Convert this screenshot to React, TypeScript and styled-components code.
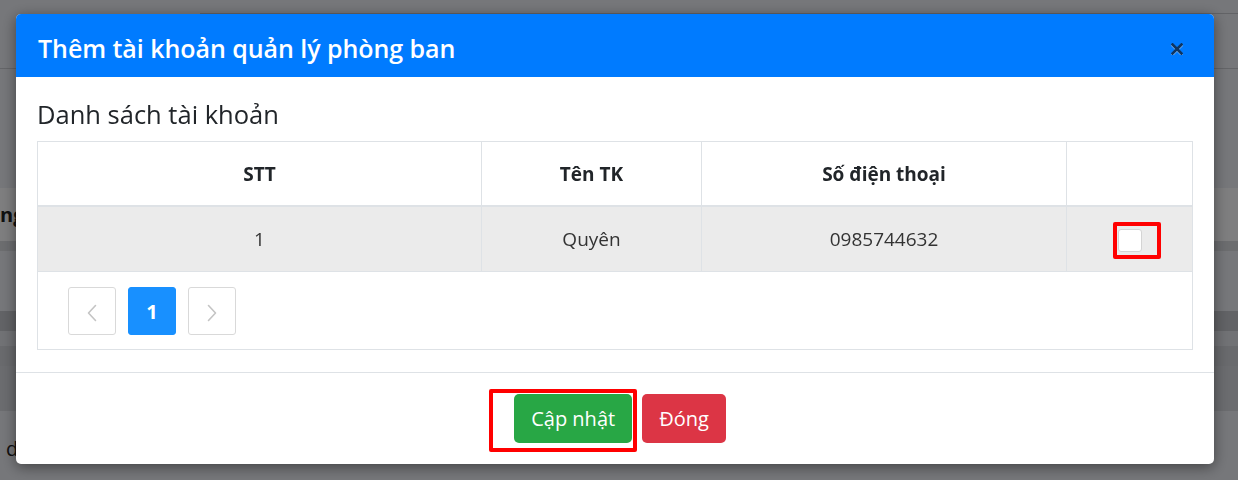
import React from "react";
import styled, { createGlobalStyle } from "styled-components";

const Global = createGlobalStyle`
  html, body { margin: 0; padding: 0; }
  body {
    width: 1238px; height: 480px; overflow: hidden;
    font-family: "Open Sans", "Noto Sans", "DejaVu Sans", sans-serif;
    color: #212529;
    background: #eceef4;
  }
`;

/* ---------- page behind the modal ---------- */
const Page = styled.div`
  display: flex;
  flex-direction: column;
  width: 1238px;
  height: 480px;
  background: #eceef4;
`;

const TopBar = styled.div`
  height: 13px;
  margin-left: 200px;
  border-bottom: 1px solid #c4c6cc;
`;

const NavLine = styled.div`
  margin-top: 54px;
  height: 1px;
  background: #c9cbd1;
`;

const Band = styled.div<{ $h: number; $bg: string; $mt?: number }>`
  display: flex;
  align-items: center;
  height: ${(p) => p.$h}px;
  margin-top: ${(p) => p.$mt ?? 0}px;
  background: ${(p) => p.$bg};
  white-space: nowrap;
  font-size: 20px;
  font-weight: 700;
  color: #222;
  padding-left: 0;
`;

const FullBand = styled.div<{ $h: number; $bg: string }>`
  height: ${(p) => p.$h}px;
  background: ${(p) => p.$bg};
`;

const BottomText = styled.div`
  margin-top: 24px;
  padding-left: 6px;
  font-size: 20px;
  color: #222;
`;

const Overlay = styled.div`
  position: fixed;
  inset: 0;
  background: rgba(0, 0, 0, 0.5);
  padding: 14px 24px 16px 16px;
`;

/* ---------- modal ---------- */
const Modal = styled.div`
  width: 1198px;
  height: 450px;
  background: #fff;
  border-radius: 5px;
  overflow: hidden;
  display: flex;
  flex-direction: column;
  box-shadow: 0 3px 14px rgba(0, 0, 0, 0.45);
`;

const Header = styled.div`
  height: 63px;
  flex: none;
  background: #007bff;
  display: flex;
  align-items: center;
  justify-content: space-between;
  padding: 4px 30px 0 22px;
  box-sizing: border-box;
`;

const Title = styled.h5`
  margin: 0;
  font-size: 25px;
  font-weight: 600;
  color: #fff;
  letter-spacing: -0.05px;
`;

const CloseBtn = styled.button`
  border: 0;
  background: transparent;
  padding: 0;
  width: 14px;
  height: 14px;
  margin-top: 2px;
  display: flex;
  align-items: center;
  justify-content: center;
  cursor: pointer;
`;

const Body = styled.div`
  padding: 22px 21px 21px;
  flex: none;
`;

const SubTitle = styled.h5`
  margin: 0 0 11px;
  font-size: 25.5px;
  font-weight: 400;
  line-height: 31px;
  color: #212529;
`;

const TableBox = styled.div`
  border: 1px solid #dee2e6;
`;

const Table = styled.table`
  width: 100%;
  border-collapse: collapse;
  table-layout: fixed;
`;

const Th = styled.th<{ $w?: number }>`
  width: ${(p) => (p.$w ? `${p.$w}px` : "auto")};
  height: 63px;
  padding: 0;
  font-size: 19px;
  font-weight: 700;
  text-align: center;
  color: #212529;
  border-left: 1px solid #dee2e6;
  border-bottom: 2px solid #dee2e6;
  &:first-child { border-left: 0; }
`;

const Tr = styled.tr`
  background: #ebebeb;
`;

const Td = styled.td`
  height: 64px;
  padding: 0;
  font-size: 19px;
  text-align: center;
  color: #333;
  border-left: 1px solid #dee2e6;
  border-bottom: 1px solid #dee2e6;
  &:first-child { border-left: 0; }
`;

const CheckWrap = styled.span`
  position: relative;
  display: inline-block;
  vertical-align: middle;
  width: 24px;
  height: 23px;
`;

const CheckBox = styled.span`
  display: block;
  width: 24px;
  height: 23px;
  box-sizing: border-box;
  background: #fff;
  border: 1px solid #d4d4d4;
  border-radius: 3px;
`;

const Highlight = styled.span<{ $l: number; $t: number; $w: number; $h: number }>`
  position: absolute;
  left: ${(p) => p.$l}px;
  top: ${(p) => p.$t}px;
  width: ${(p) => p.$w}px;
  height: ${(p) => p.$h}px;
  box-sizing: border-box;
  border: 4px solid #ff0000;
  border-radius: 2px;
  pointer-events: none;
`;

const Pager = styled.div`
  display: flex;
  gap: 12px;
  padding: 15px 30px 14px;
`;

const PageBtn = styled.button<{ $active?: boolean }>`
  width: 48px;
  height: 48px;
  box-sizing: border-box;
  display: flex;
  align-items: center;
  justify-content: center;
  padding: 0;
  border-radius: 3px;
  border: 1px solid ${(p) => (p.$active ? "#1890ff" : "#d9d9d9")};
  background: ${(p) => (p.$active ? "#1890ff" : "#fff")};
  color: ${(p) => (p.$active ? "#fff" : "#bfbfbf")};
  font-family: "Open Sans", sans-serif;
  font-size: 20px;
  font-weight: 700;
`;

const Footer = styled.div`
  margin-top: auto;
  height: 92px;
  box-sizing: border-box;
  border-top: 1px solid #dee2e6;
  display: flex;
  align-items: flex-start;
  justify-content: center;
  gap: 10px;
  padding: 21px 0 0 10px;
`;

const BtnWrap = styled.span`
  position: relative;
  display: inline-flex;
`;

const Btn = styled.button<{ $variant: "success" | "danger" }>`
  height: 49px;
  padding: 0 17px;
  border: 0;
  border-radius: 5px;
  font-family: "Open Sans", sans-serif;
  font-size: 20px;
  font-weight: 400;
  color: #fff;
  background: ${(p) => (p.$variant === "success" ? "#28a745" : "#dc3545")};
`;

const Chevron = ({ dir }: { dir: "left" | "right" }) => (
  <svg width="10" height="18" viewBox="0 0 10 18" fill="none" style={{ marginTop: 4 }}>
    <path
      d={dir === "left" ? "M8.5 1.5 L1.5 9 L8.5 16.5" : "M1.5 1.5 L8.5 9 L1.5 16.5"}
      stroke="#c4c4c4"
      strokeWidth="1.6"
      strokeLinecap="round"
      strokeLinejoin="round"
    />
  </svg>
);

const CloseIcon = () => (
  <svg width="12" height="12" viewBox="0 0 12 12">
    <path d="M1.5 1.5 L10.5 10.5 M10.5 1.5 L1.5 10.5" stroke="#7fb4ee" strokeWidth="2.6" strokeLinecap="square" transform="translate(0 1)" />
    <path d="M1.5 1.5 L10.5 10.5 M10.5 1.5 L1.5 10.5" stroke="#0f3560" strokeWidth="2.6" strokeLinecap="square" />
  </svg>
);

export default function App() {
  return (
    <>
      <Global />
      <Page>
        <TopBar />
        <NavLine />
        <Band $mt={119} $h={53} $bg="#fdfdfe">ng</Band>
        <FullBand $h={10} $bg="#d8dadf" />
        <FullBand $h={60} $bg="#eceef4" />
        <FullBand $h={20} $bg="#c4c6cc" />
        <FullBand $h={15} $bg="#e2e4ea" />
        <FullBand $h={20} $bg="#d2d4da" />
        <FullBand $h={45} $bg="#d7d9df" />
        <BottomText>dữ liệu</BottomText>
      </Page>
      <Overlay>
        <Modal>
          <Header>
            <Title>Thêm tài khoản quản lý phòng ban</Title>
            <CloseBtn aria-label="Close">
              <CloseIcon />
            </CloseBtn>
          </Header>
          <Body>
            <SubTitle>Danh sách tài khoản</SubTitle>
            <TableBox>
              <Table>
                <thead>
                  <tr>
                    <Th $w={443}>STT</Th>
                    <Th $w={219}>Tên TK</Th>
                    <Th $w={364}>Số điện thoại</Th>
                    <Th />
                  </tr>
                </thead>
                <tbody>
                  <Tr>
                    <Td>1</Td>
                    <Td>Quyên</Td>
                    <Td>0985744632</Td>
                    <Td>
                      <CheckWrap>
                        <CheckBox />
                        <Highlight $l={-5} $t={-7} $w={48} $h={37} />
                      </CheckWrap>
                    </Td>
                  </Tr>
                </tbody>
              </Table>
              <Pager>
                <PageBtn aria-label="prev">
                  <Chevron dir="left" />
                </PageBtn>
                <PageBtn $active>1</PageBtn>
                <PageBtn aria-label="next">
                  <Chevron dir="right" />
                </PageBtn>
              </Pager>
            </TableBox>
          </Body>
          <Footer>
            <BtnWrap>
              <Btn $variant="success">Cập nhật</Btn>
              <Highlight $l={-25} $t={-5} $w={148} $h={63} />
            </BtnWrap>
            <Btn $variant="danger">Đóng</Btn>
          </Footer>
        </Modal>
      </Overlay>
    </>
  );
}
